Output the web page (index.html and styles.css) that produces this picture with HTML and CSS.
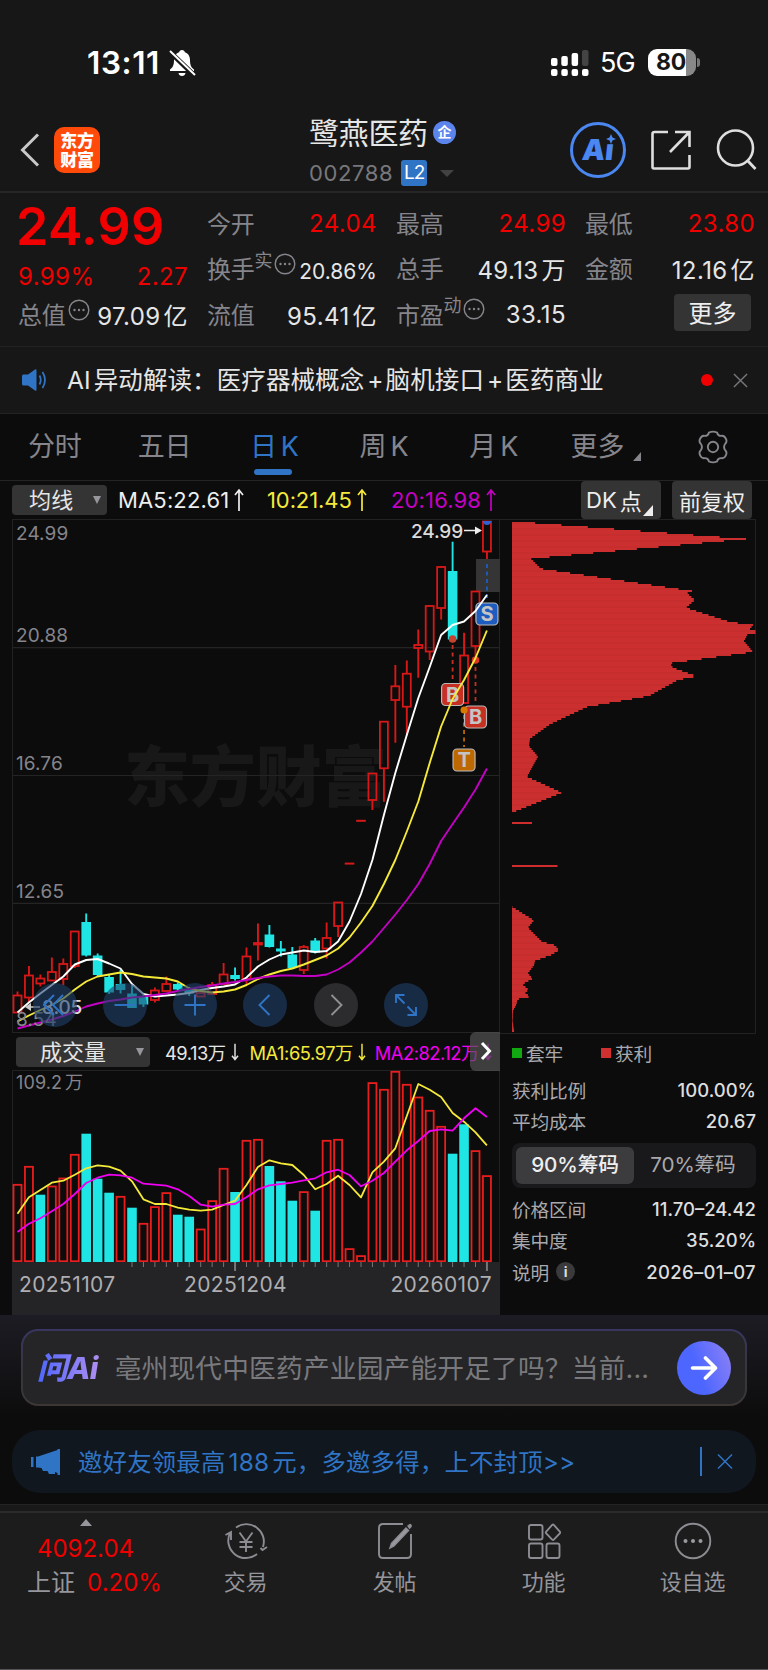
FILE: index.html
```html
<!DOCTYPE html>
<html lang="zh-CN">
<head>
  <meta charset="UTF-8">
  <meta name="viewport" content="width=device-width, initial-scale=1.0">
  <title>鹭燕医药 002788</title>
  <link rel="stylesheet" href="styles.css">
</head>
<body>
  <svg class="defs" width="0" height="0">
    <symbol id="up" viewBox="0 0 10 24"><path d="M5 23V2M1 7l4-5 4 5" fill="none" stroke="currentColor" stroke-width="1.7"/></symbol>
    <symbol id="down" viewBox="0 0 10 24"><path d="M5 1v21M1 17l4 5 4-5" fill="none" stroke="currentColor" stroke-width="1.9"/></symbol>
    <symbol id="dots" viewBox="0 0 22 22"><circle cx="11" cy="11" r="9.8" fill="none" stroke="currentColor" stroke-width="1.4"/><g fill="currentColor"><circle cx="6.5" cy="11" r="1.2"/><circle cx="11" cy="11" r="1.2"/><circle cx="15.5" cy="11" r="1.2"/></g></symbol>
    <symbol id="close" viewBox="0 0 16 16"><path d="M1 1l14 14M15 1L1 15" fill="none" stroke="currentColor" stroke-width="1.5"/></symbol>
  </svg>

  <div class="status">
    <span class="time">13:11</span>
    <svg class="bell" width="28" height="28" viewBox="0 0 28 28">
      <path d="M14 1c-1.700 0-2.600 1-2.800 2.200C7.500 4.500 6 7.500 6 11c0 6-1.500 7.500-4 9.500V22h24v-1.500c-2.500-2-4-3.500-4-9.500 0-3.500-1.500-6.500-5.200-7.800C16.600 2 15.700 1 14 1zM10.500 24h7c-.3 2-1.700 3-3.500 3s-3.200-1-3.500-3z" fill="#fff"/>
      <path d="M1 2l26 25" stroke="#171717" stroke-width="5"/><path d="M2 2l25 24" stroke="#fff" stroke-width="2"/>
    </svg>
    <svg class="signal" width="38" height="28" viewBox="0 0 38 28">
      <g fill="#fff"><rect y="9" width="6.500" height="8" rx="2"/><rect x="10.300" y="7" width="6.500" height="10" rx="2"/><rect x="20.600" y="4" width="6.500" height="13" rx="2"/>
      <rect y="20" width="6.500" height="7" rx="2"/><rect x="10.300" y="20" width="6.500" height="7" rx="2"/><rect x="20.600" y="20" width="6.500" height="7" rx="2"/><rect x="31" y="20" width="6.500" height="7" rx="2"/></g>
      <rect x="31" y="1" width="6.500" height="16" rx="2" fill="#444"/>
    </svg>
    <span class="net">5G</span>
    <span class="battery">80</span>
    <span class="battery-tip"></span>
  </div>

  <header class="header">
    <svg class="back" width="20" height="34" viewBox="0 0 20 34"><path d="M18 1.500L2.500 17 18 32.500" fill="none" stroke="#c8c8c8" stroke-width="3"/></svg>
    <div class="logo"><span>东方</span><span>财富</span></div>
    <div class="title">
      <div class="name">鹭燕医药<span class="corp">企</span></div>
      <div class="code">002788<span class="l2">L2</span><i class="tri"></i></div>
    </div>
    <div class="ai"><b>A<span>ı</span></b>
      <svg width="10" height="10" viewBox="0 0 10 10"><path d="M5 0l1.500 3.500L10 5 6.500 6.500 5 10 3.500 6.500 0 5l3.500-1.500z" fill="#4b87f0"/></svg>
    </div>
    <svg class="share" width="40" height="40" viewBox="0 0 40 40"><path d="M17 2H3.500Q1.500 2 1.500 4v33q0 1.500 1.500 1.500h34q1.500 0 1.500-1.500V25M24 2h14.500v15M38 2.500L19 22" fill="none" stroke="#dedede" stroke-width="2.600"/></svg>
    <svg class="search" width="42" height="42" viewBox="0 0 42 42"><circle cx="19.500" cy="19" r="17.500" fill="none" stroke="#dedede" stroke-width="2.600"/><path d="M31 31l8.500 9" stroke="#dedede" stroke-width="2.800"/></svg>
  </header>

  <section class="quote">
    <div class="main-price">
      <div class="price">24.99</div>
      <div class="cell red change"><span>9.99%</span><span>2.27</span></div>
      <div class="cell"><label>总值<svg class="q"><use href="#dots"/></svg></label><span>97.09<em>亿</em></span></div>
    </div>
    <div class="cells">
      <div class="cell"><label>今开</label><span class="red">24.04</span></div>
      <div class="cell"><label>最高</label><span class="red">24.99</span></div>
      <div class="cell"><label>最低</label><span class="red">23.80</span></div>
      <div class="cell"><label>换手<sup>实</sup><svg class="q"><use href="#dots"/></svg></label><span class="small">20.86%</span></div>
      <div class="cell"><label>总手</label><span>49.13<em>万</em></span></div>
      <div class="cell"><label>金额</label><span>12.16<em>亿</em></span></div>
      <div class="cell"><label>流值</label><span>95.41<em>亿</em></span></div>
      <div class="cell"><label>市盈<sup>动</sup><svg class="q"><use href="#dots"/></svg></label><span>33.15</span></div>
      <div class="cell end"><button class="more">更多</button></div>
    </div>
  </section>

  <section class="news">
    <svg width="25" height="22" viewBox="0 0 25 22"><path d="M0 7q0-1.500 1.500-1.500H6L13 .5q1.500-.8 1.500 1v19q0 1.800-1.500 1L6 16.500H1.500Q0 16.500 0 15z" fill="#2f74c5"/><path d="M17.500 6.500q2.500 4.500 0 9M20.500 3q5 8 0 16" fill="none" stroke="#2f74c5" stroke-width="1.800"/></svg>
    <p>AI<em>异动解读：医疗器械概念</em><i>+</i>脑机接口<i>+</i>医药商业</p>
    <span class="dot"></span>
    <svg class="x" width="15" height="15"><use href="#close"/></svg>
  </section>

  <nav class="tabs">
    <span>分时</span><span>五日</span><span class="active">日<em>K</em></span><span>周<em>K</em></span><span>月<em>K</em></span>
    <span class="tab-more">更多<i class="corner"></i></span>
    <span><svg width="34" height="34" viewBox="0 0 34 34"><path d="M13 2.500q4-1.800 8 0 .8 3.600 4.300 3.400 3.200-.6 4.700 3.100 1.300 3-.8 4.800-2.300 3.200 0 6.400 2.100 1.800.8 4.800-1.500 3.700-4.700 3.100-3.500-.2-4.300 3.400-4 1.800-8 0-.8-3.600-4.300-3.400Q5.500 28.700 4 25q-1.300-3 .8-4.800 2.300-3.200 0-6.400Q2.700 12 4 9q1.500-3.700 4.700-3.100 3.500.2 4.300-3.400z" fill="none" stroke="currentColor" stroke-width="1.900"/><circle cx="17" cy="17" r="5.200" fill="none" stroke="currentColor" stroke-width="1.900"/></svg></span>
  </nav>

  <div class="ma-row">
    <div class="select">均线<i></i></div>
    <span class="ma5">MA5:22.61<svg><use href="#up"/></svg></span>
    <span class="ma10">10:21.45<svg><use href="#up"/></svg></span>
    <span class="ma20">20:16.98<svg><use href="#up"/></svg></span>
    <button class="dk">DK<em>点</em><i class="corner"></i></button>
    <button class="fq">前复权</button>
  </div>

  <main class="board">
    <div class="left">
      <div class="kline">
        <svg id="kline" width="488" height="514" viewBox="12 519 488 514"></svg>
        <div class="tools">
          <span><svg viewBox="0 0 44 44"><path d="M21 12L11 22l10 10M30 12L20 22l10 10"/></svg></span>
          <span><svg viewBox="0 0 44 44"><path d="M11.500 22h21"/></svg></span>
          <span><svg viewBox="0 0 44 44"><path d="M11.500 22h21M22 11.500v21"/></svg></span>
          <span><svg viewBox="0 0 44 44"><path d="M26.500 12l-10 10 10 10"/></svg></span>
          <span class="off"><svg viewBox="0 0 44 44"><path d="M17.500 12l10 10-10 10"/></svg></span>
          <span><svg viewBox="0 0 44 44"><path d="M12 20v-8h8.500M12.500 12.500l8 8M32 24v8h-8.500M31.500 31.500l-8-8"/></svg></span>
        </div>
      </div>
      <div class="vol-row">
        <div class="select wide">成交量<i></i></div>
        <span>49.13万<svg><use href="#down"/></svg></span>
        <span class="ma10">MA1:65.97万<svg><use href="#down"/></svg></span>
        <span class="mag">MA2:82.12万<svg><use href="#down"/></svg></span>
        <div class="next"><svg width="12" height="20" viewBox="0 0 12 20"><path d="M2 2l7.500 8L2 18" fill="none" stroke="#fff" stroke-width="3"/></svg></div>
      </div>
      <svg id="volume" width="488" height="192" viewBox="12 1070 488 192"></svg>
      <div class="axis">
        <svg id="ticks" width="488" height="10" viewBox="12 1262 488 10"></svg>
        <div class="dates"><span>20251107</span><span>20251204</span><span>20260107</span></div>
      </div>
    </div>
    <div class="right">
      <svg id="chips" width="256" height="515" viewBox="500 519 256 515"></svg>
      <div class="info">
        <div class="legend"><i class="green"></i>套牢<i class="redbox"></i>获利</div>
        <div class="line"><label>获利比例</label><b>100.00%</b></div>
        <div class="line"><label>平均成本</label><b>20.67</b></div>
        <div class="toggle"><span class="on">90%筹码</span><span>70%筹码</span></div>
        <div class="line"><label>价格区间</label><b>11.70–24.42</b></div>
        <div class="line"><label>集中度</label><b>35.20%</b></div>
        <div class="line last"><label>说明<span class="tip">i</span></label><b>2026–01–07</b></div>
      </div>
    </div>
  </main>

  <section class="ask">
    <div class="ask-box">
      <span class="ask-logo">问Ai</span>
      <p>亳州现代中医药产业园产能开足了吗？当前...</p>
      <div class="go"><svg width="28" height="28" viewBox="0 0 28 28"><path d="M2.500 14h22M15.500 4l10 10-10 10" fill="none" stroke="#fff" stroke-width="3.600" stroke-linecap="round" stroke-linejoin="round"/></svg></div>
    </div>
  </section>

  <section class="invite">
    <svg width="29" height="26" viewBox="0 0 29 26"><path d="M0 8h2.500v10H0zM5 7.500h2L26.500 1V0H29v26h-2.500v-2l-2.500-1v2h-6l-1.500-3H12l-1.500-3L7 18.500H5z" fill="#2f74c5"/></svg>
    <p>邀好友领最高<em>188</em><em>元，多邀多得，上不封顶&gt;&gt;</em></p>
    <i></i>
    <svg class="x" width="16" height="17"><use href="#close"/></svg>
  </section>

  <footer class="bottom">
    <div class="index">
      <i></i>
      <div class="red">4092.04</div>
      <div>上证<span class="red">0.20%</span></div>
    </div>
    <div class="item">
      <svg width="44" height="38" viewBox="0 0 44 38"><path d="M12 5.500A17.500 17.500 0 0 1 39 25M33 32A17.500 17.500 0 0 1 6 11M1.500 13L7 10v8M43 25l-4.500 3-2-2M15.500 10.500l6.500 9 6.500-9M22 19.500V30M15.500 20h13M15.500 25h13"/></svg>
      交易
    </div>
    <div class="item">
      <svg width="36" height="38" viewBox="0 0 36 38"><path d="M26 2H6Q2 2 2 6v26q0 4 4 4h24q4 0 4-4V12"/><path d="M29 6l2.500 2.500L17 24l-4 2 1.500-4.500zM31 4l2-1.500q1.500.5 1 2L32.500 6z" fill="#9a9aa0" stroke-width="1.500"/></svg>
      发帖
    </div>
    <div class="item">
      <svg width="34" height="38" viewBox="0 0 34 38"><rect x="2" y="3" width="13.500" height="14.500" rx="2"/><rect x="2" y="21.500" width="13.500" height="14.500" rx="2"/><rect x="19.500" y="21.500" width="13" height="14.500" rx="2"/><path d="M25.200 2.800q.8-.8 1.600 0l6 6.800q.8.900 0 1.800l-6 6.200q-.8.800-1.600 0l-6-6.200q-.8-.9 0-1.800z"/></svg>
      功能
    </div>
    <div class="item">
      <svg width="38" height="38" viewBox="0 0 38 38"><circle cx="19" cy="19" r="17.300"/><g fill="#9a9aa0" stroke="none"><circle cx="11.500" cy="19" r="2"/><circle cx="19" cy="19" r="2"/><circle cx="26.500" cy="19" r="2"/></g></svg>
      设自选
    </div>
  </footer>

  <script src="chart.js"></script>
</body>
</html>
```

FILE: chart.js
```js
const RED = '#d81818';
const CYAN = '#20e5e5';
const x = i => 17.5 + i * 11.45;

function draw(id, html) {
  document.getElementById(id).innerHTML = html;
}
function line(ys, color, w) {
  return `<polyline points="${ys.map((y, i) => x(i).toFixed(1) + ',' + y).join(' ')}" fill="none" stroke="${color}" stroke-width="${w}" stroke-linejoin="round"/>`;
}
function hline(y, color = '#242424') {
  return `<path d="M12 ${y}H500" stroke="${color}" stroke-width="1.2"/>`;
}

// up/down, high, top, bottom, low
const candles = [
  ['r', 991.5, 995.5, 1012.5, 1012.5], ['r', 966, 975.5, 997.5, 1002.5], ['r', 974.5, 978.5, 983.5, 986.5],
  ['r', 957.5, 972, 980.5, 980.5], ['r', 958.5, 964, 979, 985], ['r', 931, 931.5, 966, 968],
  ['c', 913.5, 922, 955.5, 956.5], ['c', 953.5, 955.5, 975, 976.5], ['c', 975, 977, 992.5, 994],
  ['c', 969.5, 984, 990, 993.5], ['c', 985, 993.5, 1008, 1008], ['c', 995, 997, 1004.5, 1007],
  ['r', 987.5, 990.5, 1000, 1002.5], ['r', 976.5, 984, 991, 991.5], ['c', 982.5, 984, 989.5, 990],
  ['c', 987, 990, 993.5, 996], ['r', 992, 993, 996.5, 996.5], ['r', 982, 985, 994, 995],
  ['r', 963, 974.5, 984, 984], ['c', 967.5, 975, 979, 980.5], ['r', 947.5, 956.5, 979, 984],
  ['r', 923.5, 943, 944.5, 960.5], ['c', 925, 934.5, 947, 947.5], ['c', 941, 948.5, 951.5, 956.5],
  ['c', 947, 954.5, 968, 968], ['r', 945, 947, 970, 974], ['c', 938, 940.5, 952.5, 953.5],
  ['r', 922.5, 938, 948.5, 958.5], ['r', 902, 902.5, 926, 937], ['d', 863.6], ['d', 820.8],
  ['r', 773, 773.5, 800, 810], ['r', 721, 721.7, 768.3, 801.7], ['r', 665, 686.3, 700, 742.7],
  ['r', 660.5, 673.7, 706.7, 736], ['r', 629.5, 645, 648, 677.7], ['r', 605, 606, 651.5, 660],
  ['r', 566, 567, 608, 619.5], ['c', 541.7, 571, 639.5, 639.5], ['r', 632.7, 655.5, 703, 703],
  ['r', 591, 591.5, 646, 656], ['r', 521, 521.5, 551.5, 559]
];

const ma5 = [1012.5, 1002.5, 993.5, 985, 976.5, 964.5, 960, 959, 963.5, 968.5, 984, 994, 996.5, 995.5, 994.5, 993, 990, 988, 986.5, 984.5, 977.5, 966.5, 959.5, 954.5, 952.5, 950.5, 952, 951, 941.5, 921.5, 894, 860, 815, 773, 735, 698, 667, 635, 625, 621.5, 611, 595];
const ma10 = [1021.5, 1015.5, 1010, 1005, 998.5, 989.5, 981.5, 976.5, 974.5, 972.5, 974, 976.5, 977.5, 978.5, 981.5, 988.5, 991, 992.5, 991.5, 989.5, 985, 979, 974.5, 971, 968.5, 964.5, 960, 955.5, 948.5, 937.5, 922.5, 906, 884, 860, 831.5, 801.5, 763, 726.5, 699, 680, 658, 630.5];
const ma20 = [1028.5, 1025.5, 1022.5, 1019.5, 1016, 1011.5, 1006.5, 1003.5, 1001, 999.5, 997.5, 996.5, 995, 993.5, 991, 989, 987, 985.5, 983.5, 982, 980, 978, 976.5, 975.5, 975.5, 976, 976, 974.5, 969.5, 962.5, 952.5, 941.5, 928, 914.5, 900, 884, 864, 841, 824, 807.5, 789.5, 768.5];

function marker(i, y, letter, color, from) {
  const cx = x(i);
  return `<path d="M${cx} ${from}V${y - 13}" stroke="${color}" stroke-width="1.8" stroke-dasharray="4 3.500"/>
    <rect x="${cx - 11}" y="${y - 11}" width="22" height="22" rx="4" fill="${color}" stroke="#b9b9b9" stroke-width="1.200"/>
    <text x="${cx}" y="${y + 7}" class="mark">${letter}</text>`;
}

let k = '<rect x="12.500" y="519.500" width="487" height="513" fill="none" stroke="#222"/>';
k += '<text x="124" y="801" class="watermark">东方财富</text>';
k += hline(647.7) + hline(775.5) + hline(903.3);
k += '<rect x="476" y="559" width="24" height="33" fill="#353535"/>';
candles.forEach(([t, hi, top, bot, lo], i) => {
  const c = x(i);
  if (t === 'd') {
    k += `<path d="M${c - 4.8} ${hi}h9.600" stroke="${RED}" stroke-width="2"/>`;
  } else if (t === 'c') {
    k += `<path d="M${c} ${hi}V${lo}" stroke="${CYAN}" stroke-width="1.900"/><rect x="${c - 4.8}" y="${top}" width="9.600" height="${bot - top}" fill="${CYAN}"/>`;
  } else {
    k += `<path d="M${c} ${hi}V${top}M${c} ${bot}V${lo}" stroke="${RED}" stroke-width="1.900"/><rect x="${c - 4}" y="${top}" width="8" height="${bot - top}" fill="none" stroke="${RED}" stroke-width="1.800"/>`;
  }
});
k += '<path d="M482.500 521h9q-1 4-4.500 4t-4.500-4z" fill="#3061d0"/>';
k += marker(38, 694.5, 'B', '#c53023', 645) + marker(39, 760, 'T', '#bd6900', 715) + marker(40, 717, 'B', '#c53023', 667) + marker(41, 614, 'S', '#1f5cc0', 564);
k += `<circle cx="${x(38)}" cy="639" r="3.800" fill="#c8432f"/><circle cx="${x(39)}" cy="710" r="3.600" fill="#d67b00"/><circle cx="${x(40)}" cy="660" r="3.800" fill="#dc3424"/>`;
k += line(ma5, '#fff', 1.9) + line(ma10, '#f5ea3a', 1.9) + line(ma20, '#c400c4', 1.9);
k += [['24.99', 539.5], ['20.88', 641.5], ['16.76', 769.5], ['12.65', 897.5], ['8.54', 1025.5]].map(([t, y]) => `<text x="16" y="${y}" class="scale">${t}</text>`).join('');
k += '<text x="411" y="537.500" class="tag">24.99</text><path d="M464 530.500h13" stroke="#eee" stroke-width="1.500"/><path d="M475 526.500l7 4-7 4z" fill="#eee"/>';
k += '<text x="42" y="1014" class="tag">8.05</text><path d="M31 1007h9" stroke="#ccc" stroke-width="1.500"/><path d="M31 1003l-6 4 6 4z" fill="#ccc"/>';
draw('kline', k);

// bar tops, in the same pixel scale as the averages
const vol = [462, 408, -494, 467, 443, 372, -311, -446, -488, 498, -533, 579, 529, 487, -554, -560, 596, 511, 414, -486, 330, 327, -408, -454, -512, 484, -542, 330, 327, 655, 676, 157, 177, 123, 162, 200, 240, 288, -371, -283, 361, 436];
const vma1 = [551, 502, 480, 458, 452, 434, 415, 406, 410, 422, 454, 508, 522, 522, 533, 539, 542, 539, 525, 512, 465, 411, 391, 400, 405, 435, 478, 462, 437, 465, 502, 427, 395, 355, 258, 162, 179, 201, 249, 275, 307, 346];
const vma2 = [606, 581, 565, 544, 522, 492, 459, 443, 434, 436, 443, 461, 464, 467, 478, 498, 524, 530, 524, 522, 502, 478, 466, 462, 458, 451, 445, 427, 419, 435, 469, 452, 429, 395, 361, 333, 303, 298, 302, 265, 235, 261];
const vy = v => +(1030 + v / 3).toFixed(1);

let v = '<path d="M12.500 1262V1070.500H499.500V1262" fill="none" stroke="#222"/><text x="16" y="1089" class="scale vscale">109.2<tspan dx="3">万</tspan></text>';
vol.forEach((n, i) => {
  const y = vy(Math.abs(n));
  if (n < 0) v += `<rect x="${x(i) - 4.8}" y="${y}" width="9.600" height="${1262 - y}" fill="${CYAN}"/>`;
  else v += `<rect x="${x(i) - 4}" y="${y + .8}" width="8" height="${1260.4 - y}" fill="none" stroke="#e81e1e" stroke-width="1.800"/>`;
});
v += line(vma1.map(vy), '#f5ea3a', 1.8) + line(vma2.map(vy), '#f000f0', 1.8);
draw('volume', v);

let ticks = '';
for (let i = 10; i < 42; i++) {
  ticks += `<path d="M${x(i)} 1262v${i === 19 || i === 41 ? 9 : 5}" stroke="#777" stroke-width="${i === 19 || i === 41 ? 2 : 1}"/>`;
}
draw('ticks', ticks);

// cost distribution outline: y, right edge
const upper = [[522, 535], [538, 746], [540, 724], [557.7, 531], [567.7, 541], [590, 692], [592.3, 687], [599, 695], [606.7, 686], [621, 730], [624, 753], [629.3, 749], [630, 755.5], [632, 755.5], [632.7, 748], [640, 744], [651, 753], [662.3, 670], [666.7, 673], [675.3, 697], [679, 678], [695, 649], [706, 587], [723.3, 550], [737.7, 530], [745, 529], [755.7, 538], [775.7, 527], [791.7, 562], [811.7, 512]];
const lower = [[906, 512.5], [919.3, 534], [926.7, 528], [940.7, 542], [944.3, 555], [949.3, 559], [954, 551], [960, 535], [964.3, 534], [972.3, 528], [977.7, 532.5], [983.3, 522.5], [988.7, 528.5], [992, 525.5], [995.7, 530], [998.3, 517.5], [1003.3, 516.5], [1010, 513], [1020, 512.6], [1031.7, 514.3]];
function distribution(pts) {
  let s = '';
  for (let y = pts[0][0], n = 0; y < pts[pts.length - 1][0]; y += 2, n++) {
    const j = pts.findIndex(p => p[0] > y);
    const [a, b] = [pts[j - 1], pts[j]];
    const r = a[1] + (b[1] - a[1]) * (y - a[0]) / (b[0] - a[0]);
    s += `<rect x="512" y="${y}" width="${(r - 512).toFixed(1)}" height="2" fill="${n % 3 ? '#cc2f2f' : '#c62d2d'}"/>`;
  }
  return s;
}
draw('chips', '<path d="M500 519.500H755.500V1033.500H500" fill="none" stroke="#222"/>' + distribution(upper) + distribution(lower) +
  '<path d="M512 823h20M512 866h45.500" stroke="#cf2d2d" stroke-width="2"/>');
```

FILE: styles.css
```css
* {
  box-sizing: border-box;
}
body {
  margin: 0;
  width: 768px;
  height: 1670px;
  overflow: hidden;
  background: #0c0c0c;
  color: #e6e6e6;
  font-family: Inter, "Noto Sans CJK SC", sans-serif;
  letter-spacing: -0.01em;
}
p {
  margin: 0;
}
em, i {
  font-style: normal;
}
svg {
  display: block;
  flex: none;
}
.defs {
  position: absolute;
}
button {
  border: 0;
  padding: 0;
  font-family: inherit;
  color: #eee;
  background: #343434;
  border-radius: 4px;
}
.red {
  color: #ee0000;
}

/* status bar */
.status {
  height: 104px;
  padding: 21px 0 0 87px;
  background: #171717;
  display: flex;
  align-items: center;
  color: #fff;
}
.time {
  width: 81px;
  font-size: 31.5px;
  font-weight: 600;
  letter-spacing: 0.6px;
}
.signal {
  margin-left: 355px;
}
.net {
  width: 48px;
  margin-left: 11px;
  font-size: 27px;
  letter-spacing: -1px;
}
.battery {
  width: 48px;
  height: 27px;
  border-radius: 9px;
  background: linear-gradient(90deg, #fff 80%, #888 80%);
  color: #171717;
  font-size: 23px;
  line-height: 27px;
  font-weight: 700;
  padding-right: 2px;
  text-align: center;
}
.battery-tip {
  width: 3px;
  height: 9px;
  margin-left: 1px;
  border-radius: 0 4px 4px 0;
  background: #777;
}

/* header */
.header {
  height: 89px;
  background: #171717;
  border-bottom: 2px solid #262626;
  display: flex;
  align-items: center;
  padding: 5px 0 0 20px;
}
.back, .ai, .share, .search, .logo {
  margin-top: -1px;
}
.logo {
  width: 46px;
  height: 46px;
  margin-left: 14px;
  border-radius: 10px;
  background: #ff4a0a;
  color: #fff;
  font: 900 17px/19px "Noto Sans CJK SC", sans-serif;
  text-align: center;
  padding-top: 3px;
}
.logo span {
  display: block;
}
.title {
  width: 160px;
  margin-left: 209px;
  padding-top: 6px;
}
.name {
  height: 40px;
  font-size: 30px;
  line-height: 40px;
  letter-spacing: -0.3px;
  display: flex;
  align-items: center;
}
.corp {
  width: 23px;
  height: 23px;
  margin-left: 5px;
  border-radius: 50%;
  background: #5b84ec;
  color: #fff;
  font-size: 14px;
  line-height: 22px;
  font-weight: 700;
  text-align: center;
}
.code {
  height: 41px;
  display: flex;
  align-items: center;
  color: #77777c;
  font-size: 22px;
  letter-spacing: 0.6px;
}
.l2 {
  width: 26px;
  height: 26px;
  margin-left: 8px;
  border-radius: 3px;
  background: #2f74c5;
  color: #fff;
  font-size: 19px;
  line-height: 26px;
  letter-spacing: -1px;
  text-align: center;
}
.tri {
  margin-left: 13px;
  border: 7px solid transparent;
  border-top-color: #424242;
  border-bottom: 0;
}
.ai {
  position: relative;
  width: 56px;
  height: 56px;
  margin-left: 101px;
  border: 3px solid #4b87f0;
  border-radius: 50%;
  color: #4b87f0;
  text-align: center;
}
.ai b {
  display: block;
  font: 900 29px/49px Inter, sans-serif;
  transform: skewX(-6deg);
}
.ai svg {
  position: absolute;
  left: 33px;
  top: 9px;
}
.share {
  margin-left: 25px;
}
.search {
  margin-left: 25px;
}

/* quote */
.quote {
  height: 154px;
  padding: 7px 0 0 18px;
  background: #171717;
  border-bottom: 1px solid #222;
  display: flex;
}
.main-price {
  width: 170px;
}
.price {
  height: 53px;
  color: #f00000;
  font-size: 52px;
  line-height: 53px;
  font-weight: 600;
  letter-spacing: 0.3px;
  margin-left: -2px;
}
.cells {
  width: 548px;
  margin-left: 19px;
  display: grid;
  grid-template-columns: repeat(3, 170px);
  grid-auto-rows: 45.5px;
  column-gap: 19px;
}
.cell {
  height: 46px;
  display: flex;
  justify-content: space-between;
  align-items: center;
  font-size: 24px;
  letter-spacing: 0.4px;
  white-space: nowrap;
}
.main-price .cell:last-child {
  height: 31px;
}
.cell em {
  margin-left: 3px;
}
.cell label {
  margin-top: -2px;
  color: #85858b;
  letter-spacing: -0.3px;
  display: flex;
  align-items: center;
}
.cell sup {
  font-size: 18px;
  line-height: 20px;
  margin-top: -14px;
}
.q {
  width: 22px;
  height: 22px;
  margin: -8px 0 0 3px;
}
.cell sup + .q {
  margin-left: 2px;
}
.cell .small {
  font-size: 21px;
  padding-top: 5px;
  letter-spacing: 0;
}
.end {
  justify-content: flex-end;
}
.more {
  width: 77px;
  height: 37px;
  margin: -3px 4px 0 0;
  padding-bottom: 2px;
  font-size: 24px;
}

/* news */
.news {
  height: 67px;
  padding-left: 22px;
  background: #171717;
  border-bottom: 1px solid #242424;
  display: flex;
  align-items: center;
}
.news p {
  width: 630px;
  margin: -3px 0 0 20px;
  font-size: 24.5px;
  letter-spacing: 0.1px;
  white-space: nowrap;
}
.news p em {
  margin-left: 3px;
}
.news p i {
  margin: 0 2px 0 3px;
}
.dot {
  width: 12px;
  height: 12px;
  margin-left: 4px;
  border-radius: 50%;
  background: #f00000;
}
.x {
  margin-left: 20px;
  color: #77777c;
}

/* tabs */
.tabs {
  height: 67px;
  border-bottom: 1px solid #242424;
  display: flex;
  color: #85858b;
  font-size: 27px;
  line-height: 65px;
}
.tabs span {
  width: 110px;
  height: 65px;
  display: flex;
  justify-content: center;
  align-items: center;
}
.tabs em {
  margin-left: 4px;
}
.tabs .tab-more {
  padding-left: 5px;
}
.tabs .active {
  position: relative;
  color: #2f74c5;
}
.active::after {
  content: "";
  position: absolute;
  left: 35px;
  bottom: 4px;
  width: 38px;
  height: 6px;
  border-radius: 3px;
  background: #2f74c5;
}
.corner {
  border-left: 8px solid transparent;
  border-bottom: 9px solid currentColor;
}
.tabs .corner {
  margin: 20px 0 0 9px;
}

/* moving averages */
.ma-row {
  height: 38px;
  padding-left: 12px;
  display: flex;
  align-items: center;
  font-size: 22px;
  letter-spacing: 0.15px;
}
.ma-row > span {
  display: flex;
  align-items: center;
}
.ma-row svg {
  width: 10px;
  height: 24px;
  margin-left: 5px;
}
.select {
  width: 95px;
  height: 30px;
  padding: 0 6px 0 17px;
  border-radius: 4px;
  background: #343434;
  display: flex;
  justify-content: space-between;
  align-items: center;
  font-size: 22px;
  line-height: 28px;
}
.select i {
  border: 4.5px solid transparent;
  border-top: 8px solid #96969c;
  border-bottom: 0;
}
.ma5 {
  width: 149px;
  margin-left: 11px;
  color: #eee;
}
.ma10 {
  color: #f5ea3a;
}
.ma-row .ma10 {
  width: 124px;
  letter-spacing: -0.1px;
}
.ma20 {
  width: 190px;
  color: #c400c4;
}
.dk, .fq {
  height: 38px;
  font-size: 22px;
  letter-spacing: 0;
}
.dk {
  width: 80px;
  display: flex;
  align-items: center;
  padding-left: 5px;
}
.dk em {
  margin-left: 3px;
}
.dk .corner {
  border-left-width: 10px;
  border-bottom-width: 11px;
  margin: 21px 0 0 1px;
}
.fq {
  width: 80px;
  margin-left: 11px;
}

/* chart board */
.board {
  height: 796px;
  display: flex;
  padding-left: 12px;
}
.left {
  width: 488px;
}
.kline {
  position: relative;
  height: 514px;
}
.scale {
  fill: #85858b;
  font-size: 19px;
  letter-spacing: 0.1px;
}
.vscale {
  font-size: 18px;
}
.tag {
  fill: #dcdcdc;
  font-size: 19px;
  font-weight: 500;
}
.mark {
  fill: #c4c4c4;
  font-size: 20px;
  font-weight: 700;
  text-anchor: middle;
}
.watermark {
  fill: #181818;
  font-size: 66px;
  font-weight: 900;
}
.tools {
  position: absolute;
  left: 20.5px;
  bottom: 6px;
  display: flex;
  gap: 26.3px;
}
.tools span {
  width: 44px;
  height: 44px;
  border-radius: 50%;
  background: rgba(31, 65, 108, 0.6);
}
.tools path {
  fill: none;
  stroke: #2f74c5;
  stroke-width: 1.9;
}
.tools .off {
  background: #2c2c2e;
}
.tools .off path {
  stroke: #909090;
}
.vol-row {
  position: relative;
  height: 37px;
  padding-left: 4px;
  display: flex;
  align-items: center;
  font-size: 18.3px;
  letter-spacing: -0.45px;
}
.vol-row span {
  display: flex;
  align-items: center;
  white-space: nowrap;
  width: 85px;
}
.vol-row .ma10, .vol-row .mag {
  width: 126px;
}
.vol-row svg {
  width: 8px;
  height: 18px;
  margin-left: 5px;
}
.wide {
  flex: none;
  width: 134px;
  padding-left: 24px;
  margin-right: 15px;
  letter-spacing: 0;
}
.mag {
  color: #f000f0;
}
.next {
  position: absolute;
  right: 0;
  top: -1px;
  width: 30px;
  height: 39px;
  border-radius: 6px 0 0 6px;
  background: rgba(84, 84, 84, 0.7);
}
.vol-row .next svg {
  width: 12px;
  height: 20px;
  margin: 9px 0 0 10px;
}
.axis {
  height: 53px;
  background: #242426;
}
.dates {
  display: grid;
  grid-template-columns: 165px 1fr auto;
  padding: 0 8px 0 7px;
  color: #aeaeb2;
  font-size: 21px;
  line-height: 26px;
  letter-spacing: 0.4px;
}

/* chip distribution */
.right {
  width: 256px;
}
.info {
  padding-left: 12px;
  color: #a9a9ad;
  font-size: 18.7px;
}
.legend {
  height: 41px;
  padding-bottom: 5px;
  display: flex;
  align-items: center;
}
.legend i {
  width: 10px;
  height: 10px;
  margin: 1px 4px 0 0;
}
.green {
  background: #12a812;
}
.legend .redbox {
  margin-left: 38px;
  background: #d03030;
}
.line {
  height: 30.5px;
  display: flex;
  justify-content: space-between;
  align-items: center;
}
.line b {
  color: #dedede;
  font-weight: 500;
  font-size: 18.5px;
  letter-spacing: 0;
}
.line label {
  display: flex;
  align-items: center;
  margin-top: -1px;
}
.line.last {
  height: 34px;
}
.last b {
  letter-spacing: 0.3px;
}
.toggle {
  height: 45px;
  margin: 7px 0 6px;
  padding: 4px;
  border-radius: 8px;
  background: #19191b;
  display: flex;
  font-size: 20.7px;
  line-height: 36px;
  text-align: center;
}
.toggle span {
  width: 118px;
  border-radius: 6px;
}
.toggle .on {
  background: #3c3c3e;
  color: #eee;
  font-weight: 500;
}
.tip {
  width: 19px;
  height: 19px;
  margin-left: 7px;
  border-radius: 50%;
  background: #3a3a3c;
  color: #ddd;
  font-size: 14px;
  line-height: 19px;
  font-weight: 700;
  text-align: center;
}

/* ask */
.ask {
  height: 115px;
  padding: 14px 21px 0 21px;
  background: linear-gradient(#1d1c24, #0c0c0c 90%);
}
.ask-box {
  height: 77px;
  padding: 0 14px;
  border: 2px solid transparent;
  border-radius: 17px;
  background: linear-gradient(#252527, #252527) padding-box, linear-gradient(#383660, #37363e 50%, #3c3735) border-box;
  display: flex;
  align-items: center;
}
.ask-logo {
  width: 78px;
  margin-top: -4px;
  font-size: 30.5px;
  font-style: italic;
  font-weight: 800;
  letter-spacing: -0.6px;
  background: linear-gradient(90deg, #4d66ff, #a98cf0 75%);
  -webkit-background-clip: text;
  color: transparent;
}
.ask p {
  width: 565px;
  margin-top: -3px;
  font-size: 26.7px;
  letter-spacing: 0.2px;
  color: #79797d;
  white-space: nowrap;
}
.go {
  width: 54px;
  height: 54px;
  border-radius: 50%;
  background: linear-gradient(70deg, #4c66ff 40%, #9082f5);
  display: flex;
  align-items: center;
  justify-content: center;
}

/* invite */
.invite {
  height: 63px;
  margin: 0 12px;
  padding-left: 19px;
  border-radius: 28px;
  background: #10171f;
  display: flex;
  align-items: center;
  color: #2f74c5;
}
.invite p {
  width: 622px;
  margin: -3px 0 0 18px;
  font-size: 24.4px;
  letter-spacing: 0.2px;
}
.invite em {
  margin-left: 3px;
}
.invite i {
  width: 1.5px;
  height: 29px;
  background: #2f74c5;
}
.invite .x {
  margin-left: 15px;
  color: #2f74c5;
}

/* bottom bar */
.bottom {
  height: 166px;
  margin-top: 11px;
  padding-top: 7px;
  border-top: 1px solid #242424;
  border-bottom: 1px solid #555;
  background: linear-gradient(#191919 6px, #2b2b2b 6px, #2b2b2b 8px, #1c1c1c 8px);
  display: flex;
  color: #95959b;
}
.index {
  width: 171px;
  padding-top: 7px;
  display: flex;
  flex-direction: column;
  align-items: center;
  font-size: 24px;
  line-height: 34px;
  letter-spacing: 0;
}
.index i {
  border: 6.5px solid transparent;
  border-bottom: 7px solid #95959b;
  border-top: 0;
  margin-bottom: 6px;
}
.index div:last-child {
  padding-left: 18px;
}
.index span {
  margin-left: 12px;
}
.item {
  width: 149px;
  padding-top: 10px;
  display: flex;
  flex-direction: column;
  align-items: center;
  font-size: 22px;
  line-height: 30px;
}
.item svg {
  margin-bottom: 7px;
  fill: none;
  stroke: #8c8c92;
  stroke-width: 1.9;
}
```
